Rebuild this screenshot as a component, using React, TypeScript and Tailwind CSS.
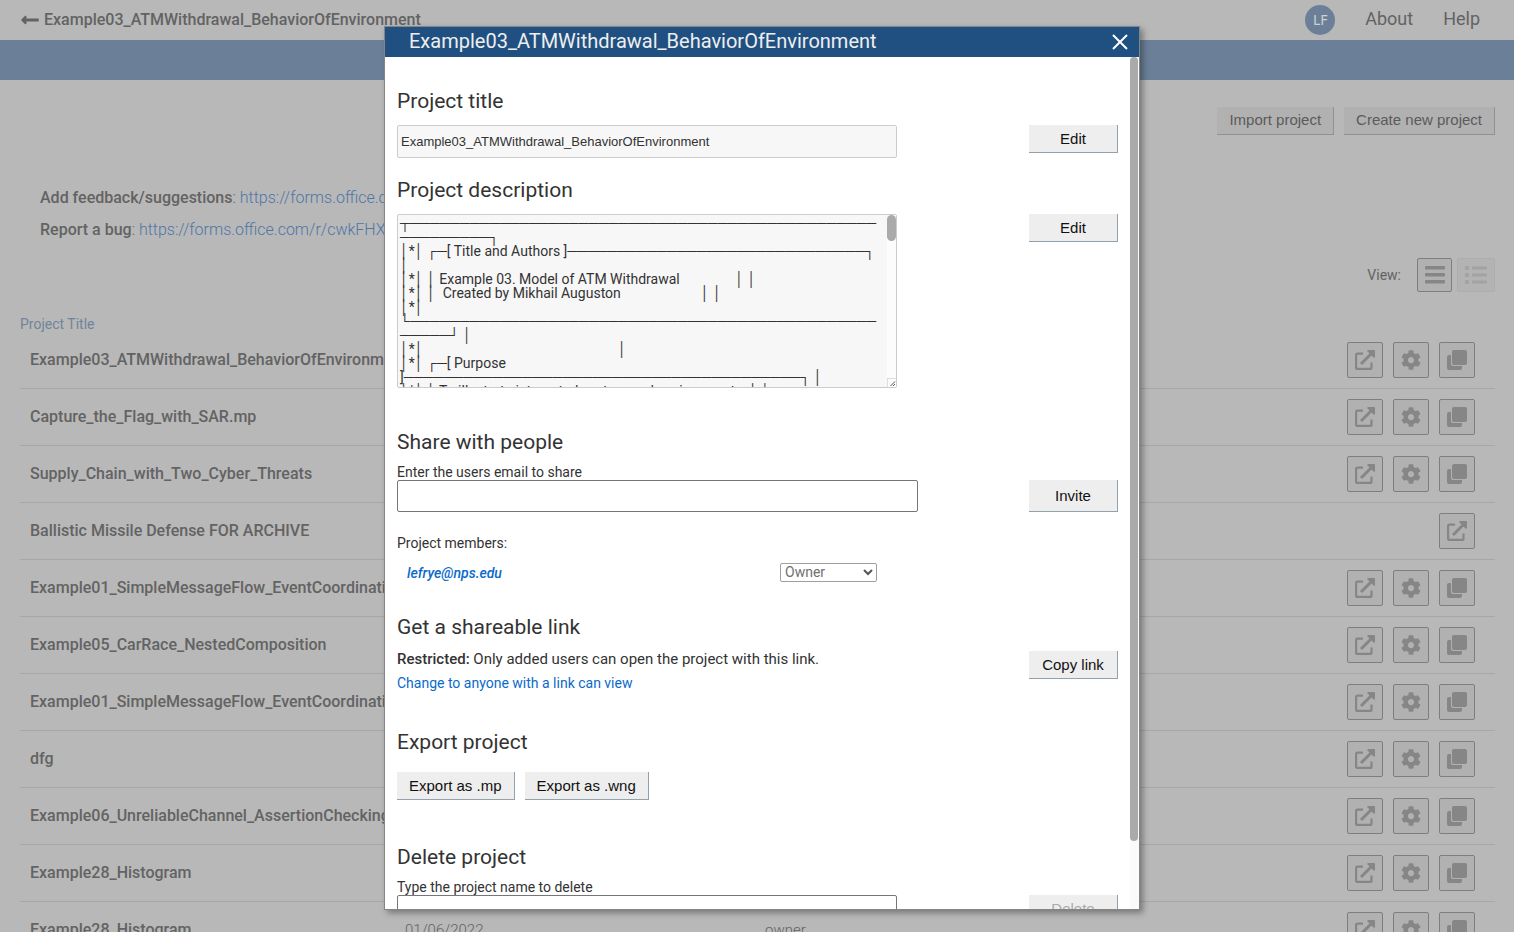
import React from "react";
import { FaCog, FaLongArrowAltLeft } from "react-icons/fa";

const PROJECT = "Example03_ATMWithdrawal_BehaviorOfEnvironment";

const rows: { title: string; date?: string; role?: string; locked?: boolean }[] = [
  { title: PROJECT },
  { title: "Capture_the_Flag_with_SAR.mp" },
  { title: "Supply_Chain_with_Two_Cyber_Threats" },
  { title: "Ballistic Missile Defense FOR ARCHIVE", locked: true },
  { title: "Example01_SimpleMessageFlow_EventCoordination" },
  { title: "Example05_CarRace_NestedComposition" },
  { title: "Example01_SimpleMessageFlow_EventCoordination" },
  { title: "dfg" },
  { title: "Example06_UnreliableChannel_AssertionChecking" },
  { title: "Example28_Histogram" },
  { title: "Example28_Histogram", date: "01/06/2022", role: "owner" },
];

const line = (n: number) => "─".repeat(n);
const gap = (n: number) => " ".repeat(n);

const description = [
  `┬${line(47)}`,
  `${line(9)}┐`,
  `│*│ ┌─[ Title and Authors ]${line(30)}┐`,
  `│`,
  `│*│ │ Example 03. Model of ATM Withdrawal${gap(16)}│ │`,
  `│*│ │  Created by Mikhail Auguston${gap(23)}│ │`,
  `│*│`,
  `└${line(47)}`,
  `${line(5)}┘ │`,
  `│*│${gap(56)}│`,
  `│*│ ┌─[ Purpose`,
  `]${line(40)}┐ │`,
  `│*│ │ To illustrate integrated system and environment${gap(4)}│ │`,
].join("\n");

function OpenIcon() {
  return (
    <svg viewBox="0 0 20 20" className="size-5" fill="none" stroke="currentColor" strokeWidth="2.2" aria-hidden="true">
      <path d="M8 3.600H2.600Q1.100 3.600 1.100 5.100V17.400Q1.100 18.900 2.600 18.900H15Q16.500 18.900 16.500 17.400V12.500" />
      <path d="M6 14 17.500 2.500" strokeWidth="3" />
      <path d="M12.500 0H19Q20 0 20 1V7.500H18.500L12.500 1.500Z" fill="currentColor" stroke="none" />
    </svg>
  );
}

function CopyIcon() {
  return (
    <svg viewBox="0 0 20 20" className="size-5" fill="currentColor" aria-hidden="true">
      <rect x="5" y="0" width="15" height="15" rx="2" />
      <path d="M4 5H2Q0 5 0 7V18Q0 20 2 20H13Q15 20 15 18V16H6Q4 16 4 14Z" />
    </svg>
  );
}

function IconButton({ label, children }: { label: string; children: React.ReactNode }) {
  return (
    <button
      type="button"
      aria-label={label}
      className="flex size-9 items-center justify-center rounded-[2px] border border-[#7e7e7e] bg-[#b1b1b1] text-[#868686]"
    >
      {children}
    </button>
  );
}

function PageButton({ children }: { children: React.ReactNode }) {
  return (
    <button
      type="button"
      className="h-7 border-r border-b border-[#8b9299] bg-[#b1b1b1] px-3 font-['Liberation_Sans',sans-serif] text-[15px] text-[#5b5b5b]"
    >
      {children}
    </button>
  );
}

function ModalButton({
  children,
  wide = true,
  tall = false,
  disabled = false,
}: {
  children: React.ReactNode;
  wide?: boolean;
  tall?: boolean;
  disabled?: boolean;
}) {
  return (
    <button
      type="button"
      disabled={disabled}
      className={`shrink-0 border-r border-b border-[#93a1ad] bg-[#eeeeee] font-['Liberation_Sans',sans-serif] text-[15px] text-[#111111] disabled:text-[#aaaaaa] ${
        tall ? "h-8" : "h-7"
      } ${wide ? "w-[89px]" : "px-3"}`}
    >
      {children}
    </button>
  );
}

function Heading({ children }: { children: React.ReactNode }) {
  return <h2 className="text-[21px] leading-6 font-normal text-[#333333]">{children}</h2>;
}

function Page() {
  return (
    <div className="text-[#636363]">
      <header className="flex h-10 items-center justify-between pr-[34px] pl-5">
        <a href="#projects" className="flex items-center gap-1 text-[16px] font-medium">
          <FaLongArrowAltLeft className="size-5" />
          {PROJECT}
        </a>
        <nav className="flex items-center gap-[30px] text-[18px] leading-6">
          <span className="flex size-[30px] items-center justify-center rounded-full bg-[#6b8098] font-['Noto_Sans',sans-serif] text-[14px] text-[#d0d0d0]">
            LF
          </span>
          <a href="#about" className="pb-0.5">About</a>
          <a href="#help" className="pb-0.5">Help</a>
        </nav>
      </header>
      <div className="h-10 bg-[#6b8098]" />
      <main>
        <div className="flex justify-end gap-2.5 pt-[27px] pr-[19px]">
          <PageButton>Import project</PageButton>
          <PageButton>Create new project</PageButton>
        </div>
        <div className="mt-[47px] pl-10 text-[16px] leading-8 font-light">
          <p>
            <b className="font-medium">Add feedback/suggestions</b>:{" "}
            <a href="#feedback" className="text-[#4f76a6]">https://forms.office.com</a>
          </p>
          <p>
            <b className="font-medium">Report a bug</b>:{" "}
            <a href="#bug" className="text-[#4f76a6]">https://forms.office.com/r/cwkFHX</a>
          </p>
        </div>
        <div className="mt-3 flex items-center justify-end pr-[19px] text-[14px]">
          <span className="mr-4">View:</span>
          <button type="button" aria-label="Compact list" className="mr-[5px] flex h-[34px] w-[35px] items-center justify-center rounded-[2px] border border-[#7e7e7e] bg-[#b1b1b1] text-[#868686]">
            <svg viewBox="0 0 20 18" className="h-[18px] w-5" fill="currentColor" aria-hidden="true">
              <rect y="0" width="20" height="3.500" rx="1" />
              <rect y="7" width="20" height="3.500" rx="1" />
              <rect y="14" width="20" height="3.500" rx="1" />
            </svg>
          </button>
          <button type="button" aria-label="Detailed list" className="flex h-[34px] w-[38px] items-center justify-center rounded-[2px] border border-[#adadad] bg-[#b3b3b3] text-[#a2a2a2]">
            <svg viewBox="0 0 22 18" className="h-[18px] w-[22px]" fill="currentColor" aria-hidden="true">
              <rect y="0" width="4" height="4" rx="1" />
              <rect y="7" width="4" height="4" rx="1" />
              <rect y="14" width="4" height="4" rx="1" />
              <rect x="7" y="0.500" width="15" height="3" rx="1" />
              <rect x="7" y="7.500" width="15" height="3" rx="1" />
              <rect x="7" y="14.500" width="15" height="3" rx="1" />
            </svg>
          </button>
        </div>
        <div className="pr-[19px] pl-5">
          <table className="mt-6 w-full table-fixed border-separate border-spacing-0 text-[16px]">
            <thead>
              <tr className="h-4 text-left text-[14px] leading-4 text-[#71849a]">
                <th className="w-[375px] font-normal">Project Title</th>
                <th className="w-[360px]" aria-label="Date" />
                <th aria-label="Role" />
                <th aria-label="Actions" />
              </tr>
            </thead>
            <tbody>
              {rows.map((row, i) => (
                <tr key={i} className="h-[57px] *:border-b *:border-[#a7a7a7]">
                  <td className="overflow-hidden pl-2.5 font-medium whitespace-nowrap">{row.title}</td>
                  <td className="pl-2.5 text-[15px] font-light">{row.date}</td>
                  <td className="pl-2.5 text-[15px] font-light">{row.role}</td>
                  <td className="pr-5">
                    <div className="flex justify-end gap-2.5">
                      <IconButton label="Open project">
                        <OpenIcon />
                      </IconButton>
                      {!row.locked && (
                        <>
                          <IconButton label="Project settings">
                            <FaCog className="size-5" />
                          </IconButton>
                          <IconButton label="Copy project">
                            <CopyIcon />
                          </IconButton>
                        </>
                      )}
                    </div>
                  </td>
                </tr>
              ))}
            </tbody>
          </table>
        </div>
      </main>
    </div>
  );
}

function Modal() {
  return (
    <div role="dialog" aria-modal="true" aria-label={PROJECT} className="flex h-full w-[756px] flex-col border border-[#858585] bg-white text-[#333333] shadow-[3px_3px_6px_rgba(0,0,0,0.35)]">
      <div className="flex h-[30px] shrink-0 items-start justify-between bg-[#205081] pr-[11px] pl-6 text-[20px] text-[#eeeeee]">
        <h1 className="leading-7">{PROJECT}</h1>
        <button type="button" aria-label="Close" className="flex h-[30px] items-center text-white">
          <svg viewBox="0 0 16 16" className="size-4" fill="none" stroke="currentColor" strokeWidth="2" aria-hidden="true">
            <path d="M1 1 15 15M15 1 1 15" />
          </svg>
        </button>
      </div>
      <div className="relative min-h-0 flex-1 overflow-hidden pt-8 pr-[21px] pl-3 text-[14px] leading-4">
        <Heading>
          <label htmlFor="title">Project title</label>
        </Heading>
        <div className="mt-3 flex items-start justify-between">
          <input
            id="title"
            readOnly
            value={PROJECT}
            className="h-[33px] w-[500px] rounded-[2px] border border-[#cccccc] bg-[#f7f7f7] px-[3px] font-['Liberation_Sans',sans-serif] text-[13px]"
          />
          <ModalButton>Edit</ModalButton>
        </div>

        <div className="mt-5">
          <Heading>
            <label htmlFor="description">Project description</label>
          </Heading>
        </div>
        <div className="mt-3 flex items-start justify-between">
          <div className="relative">
            <textarea
              id="description"
              readOnly
              wrap="off"
              value={description}
              className="block h-[174px] w-[500px] resize-none overflow-hidden rounded-[2px] border border-[#cccccc] bg-[#f7f7f7] px-0.5 pt-px font-['Roboto','Liberation_Sans',sans-serif] text-[14px] leading-[14px]"
            />
            <div className="absolute inset-y-px right-px w-[9px] bg-[#fcfcfc]">
              <div className="h-[26px] rounded-full bg-[#aaaaaa]" />
              <svg viewBox="0 0 9 9" className="absolute bottom-0 size-[9px]" stroke="#555555" aria-hidden="true">
                <path d="M0 0.500H9M0.500 0V9" stroke="#dddddd" />
                <path d="M3.500 8 8 3.500M6 8 8 6" />
              </svg>
            </div>
          </div>
          <ModalButton>Edit</ModalButton>
        </div>

        <div className="mt-[42px]">
          <Heading>Share with people</Heading>
        </div>
        <label htmlFor="email" className="mt-2.5 block">
          Enter the users email to share
        </label>
        <div className="flex items-start justify-between">
          <input id="email" type="email" className="h-8 w-[521px] rounded-[2px] border border-[#767676] bg-white px-1" />
          <ModalButton tall>Invite</ModalButton>
        </div>
        <p className="mt-[23px]">Project members:</p>
        <div className="mt-3 flex h-[19px] w-[480px] items-center justify-between pl-2.5">
          <span className="font-medium text-[#0a6acb] italic">lefrye@nps.edu</span>
          <span className="relative flex">
            <select
              aria-label="Member role"
              disabled
              className="h-[19px] w-[97px] appearance-none rounded-[2px] border border-[#9f9f9f] bg-white px-1 text-[14px] leading-[17px] text-[#707070]"
            >
              <option>Owner</option>
            </select>
            <svg viewBox="0 0 10 7" className="absolute top-[6px] right-1 h-[7px] w-2.5" fill="none" stroke="#555555" strokeWidth="2" aria-hidden="true">
              <path d="M1 1 5 5 9 1" />
            </svg>
          </span>
        </div>

        <div className="mt-[33px]">
          <Heading>Get a shareable link</Heading>
        </div>
        <div className="mt-2.5 flex items-start justify-between leading-5">
          <div>
            <p className="text-[15px]">
              <b className="font-medium">Restricted:</b> Only added users can open the project with this link.
            </p>
            <a href="#access" className="mt-1 block text-[#0a6acb]">
              Change to anyone with a link can view
            </a>
          </div>
          <div className="pt-0.5">
            <ModalButton>Copy link</ModalButton>
          </div>
        </div>

        <div className="mt-[37px]">
          <Heading>Export project</Heading>
        </div>
        <div className="mt-[18px] flex gap-2.5">
          <ModalButton wide={false}>Export as .mp</ModalButton>
          <ModalButton wide={false}>Export as .wng</ModalButton>
        </div>

        <div className="mt-[45px]">
          <Heading>Delete project</Heading>
        </div>
        <label htmlFor="delete" className="mt-2.5 block">
          Type the project name to delete
        </label>
        <div className="flex items-start justify-between">
          <input id="delete" className="h-8 w-[500px] rounded-[2px] border border-[#767676] bg-white px-1" />
          <ModalButton disabled>Delete</ModalButton>
        </div>

        <div className="absolute inset-y-0 right-0 w-[9px] bg-[#fafafa]">
          <div className="h-[92%] w-2 rounded-full bg-[#aaaaaa]" />
        </div>
      </div>
    </div>
  );
}

export default function App() {
  return (
    <div className="relative h-screen overflow-hidden bg-[#b8b8b8] font-['Roboto','Liberation_Sans',sans-serif]">
      <Page />
      <div className="absolute inset-0 flex justify-center pt-[26px] pb-[22px] pl-2.5">
        <Modal />
      </div>
    </div>
  );
}
